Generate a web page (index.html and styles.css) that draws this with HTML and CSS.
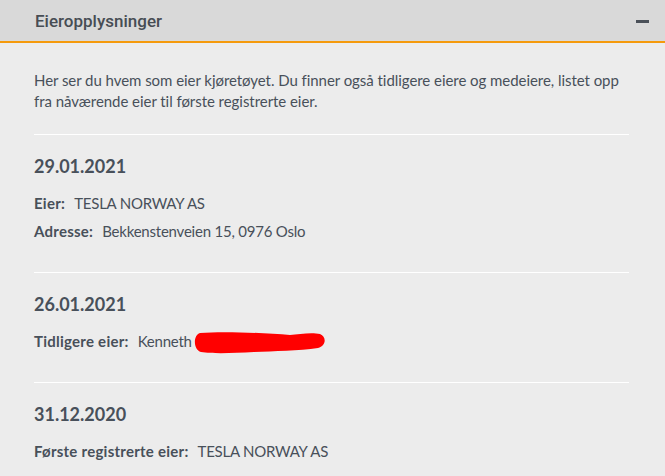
FILE: index.html
```html
<!DOCTYPE html>
<html lang="no">
<head>
    <meta charset="UTF-8">
    <meta name="viewport" content="width=device-width, initial-scale=1.0">
    <title>Eieropplysninger</title>
    <link rel="stylesheet" href="styles.css">
</head>
<body>
  <div class="panel">
    <div class="panel-head">
      <h2 class="panel-title">Eieropplysninger</h2>
      <span class="collapse-icon"></span>
    </div>
    <div class="panel-body">
      <p class="intro">Her ser du hvem som eier kjøretøyet. Du finner også tidligere eiere og medeiere, listet opp fra nåværende eier til første registrerte eier.</p>

      <div class="owner">
        <h3 class="owner-date">29.01.2021</h3>
        <div class="row"><span class="label">Eier:</span><span class="value">TESLA NORWAY AS</span></div>
        <div class="row"><span class="label">Adresse:</span><span class="value">Bekkenstenveien 15, 0976 Oslo</span></div>
      </div>

      <div class="owner">
        <h3 class="owner-date">26.01.2021</h3>
        <div class="row"><span class="label">Tidligere eier:</span><span class="value name">Kenneth<svg class="scribble" width="132" height="23" viewBox="0 0 132 23"><path d="M6,2 C30,0 70,2 96,4 C105,3 118,1 126,3 C133,6 132,15 124,17 C105,20 80,20 60,21 C40,22 20,23 7,21 C-1,19 -1,4 6,2 Z" fill="#ff0000"/></svg></span></div>
      </div>

      <div class="owner">
        <h3 class="owner-date">31.12.2020</h3>
        <div class="row"><span class="label">Første registrerte eier:</span><span class="value">TESLA NORWAY AS</span></div>
      </div>
    </div>
  </div>
</body>
</html>
```

FILE: styles.css
```css
body {
  margin: 0;
  background: #ececec;
  color: #48505a;
  font-family: Lato, "Open Sans", sans-serif;
}
.panel-head {
  display: flex;
  justify-content: space-between;
  align-items: center;
  height: 41px;
  padding: 0 16px 0 35px;
  background: #d9d9d9;
  border-bottom: 2px solid #f59a0c;
}
.panel-title {
  margin: 0;
  font-family: Roboto, sans-serif;
  font-size: 17px;
  font-weight: 500;
  color: #474d54;
}
.collapse-icon {
  width: 13px;
  height: 3px;
  margin-top: 1px;
  background: #4a5058;
}
.panel-body {
  padding: 27px 36px 0 34px;
}
.intro {
  margin: 0;
  padding-bottom: 22px;
  font-size: 15px;
  line-height: 21px;
  letter-spacing: -0.05px;
}
.owner {
  border-top: 1px solid #ffffff;
  padding: 19px 0 27px;
}
.owner-date {
  margin: 0 0 11px;
  font-size: 18px;
  line-height: 24px;
  font-weight: 700;
}
.row {
  display: flex;
  gap: 9px;
  font-size: 15px;
  line-height: 28px;
}
.label {
  font-weight: 700;
  letter-spacing: 0.25px;
}
.value {
  letter-spacing: -0.22px;
}
.name {
  display: flex;
  align-items: center;
}
.scribble {
  margin-left: 2px;
  margin-top: 2px;
}
```
